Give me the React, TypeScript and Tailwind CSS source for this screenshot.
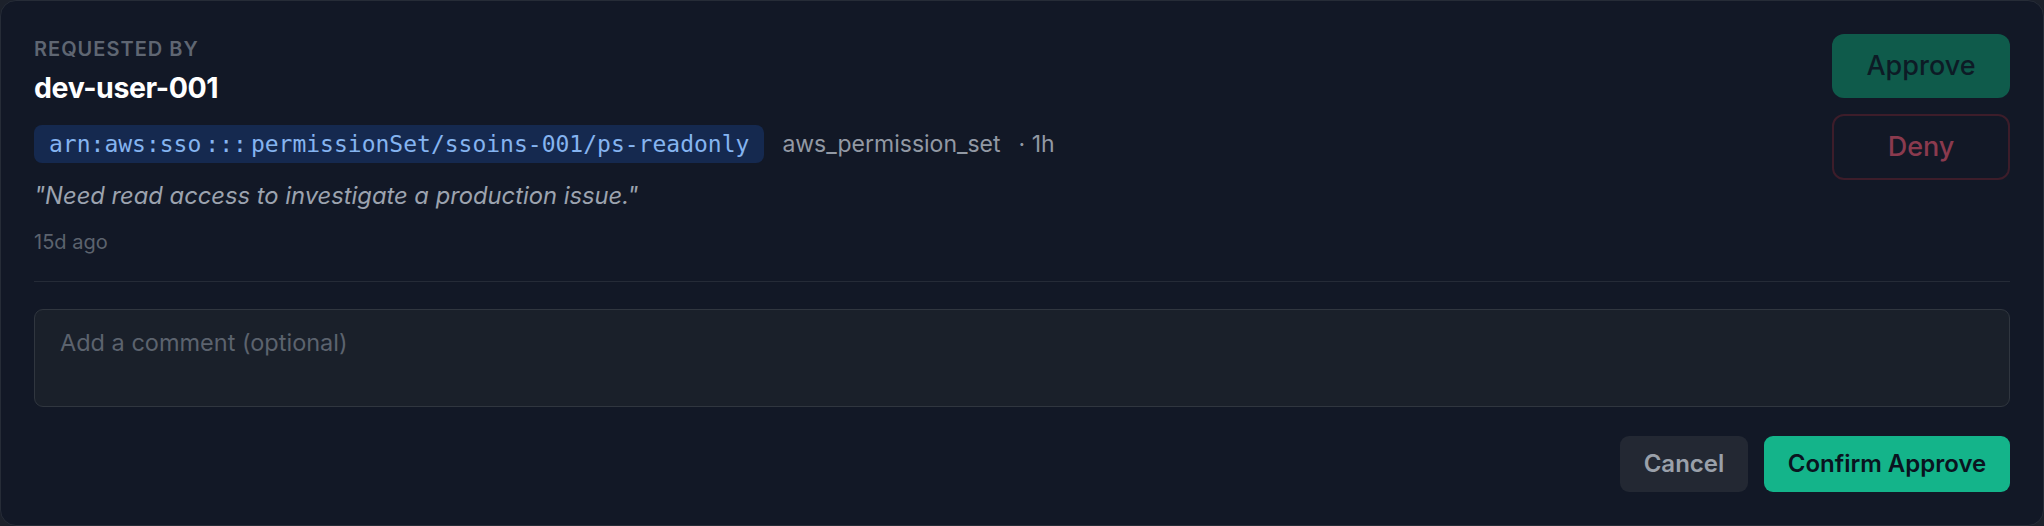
import React, { useState } from 'react';

interface AccessRequest {
  id: string;
  requester: string;
  resourceArn: string;
  resourceType: string;
  duration: string;
  reason: string;
  age: string;
}

const request: AccessRequest = {
  id: 'req-001',
  requester: 'dev-user-001',
  resourceArn: 'arn:aws:sso:::permissionSet/ssoins-001/ps-readonly',
  resourceType: 'aws_permission_set',
  duration: '1h',
  reason: 'Need read access to investigate a production issue.',
  age: '15d ago',
};

// the ":::" in the ARN gets a bit of air, like a ligature font would give it
const ArnText: React.FC<{ arn: string }> = ({ arn }) => {
  const [head, tail] = arn.split(':::');
  if (tail === undefined) return <>{arn}</>;
  return (
    <>
      {head}
      <span className="mx-[4px]">:::</span>
      {tail}
    </>
  );
};

const ApprovalCard: React.FC<{ req: AccessRequest }> = ({ req }) => {
  const [comment, setComment] = useState('');

  return (
    <div className="h-[526px] rounded-[16px] border border-[#262c37] bg-[#121826] p-[33px] font-['Inter',sans-serif]">
      {/* Request details + quick actions */}
      <div className="flex items-start justify-between">
        <div className="flex flex-col">
          <span className="text-[20px] leading-[30px] font-semibold uppercase tracking-[1px] text-[#5f6672]">
            Requested by
          </span>
          <span className="mt-[4px] text-[28.5px] leading-[40px] font-bold tracking-[-0.4px] text-white">
            {req.requester}
          </span>
          <div className="mt-[17px] flex items-center gap-[18px]">
            <code className="flex h-[38px] items-center rounded-[8px] bg-[#15294f] px-[15px] font-['DejaVu_Sans_Mono',monospace] text-[23px] text-[#85b4f0]">
              <ArnText arn={req.resourceArn} />
            </code>
            <span className="text-[23px] text-[#9299a4]">{req.resourceType}</span>
            <span className="text-[23px] text-[#9299a4]">· {req.duration}</span>
          </div>
          <p className="mt-[16px] text-[23.75px] leading-[33px] italic text-[#9ca3af]">"{req.reason}"</p>
          <span className="mt-[16px] text-[20px] leading-[28px] text-[#5c636e]">{req.age}</span>
        </div>

        <div className="flex flex-col gap-[16px]">
          <button className="h-[64px] w-[178px] rounded-[12px] bg-[#0f5b4b] text-[27px] font-medium text-[#0d1b26]">
            Approve
          </button>
          <button className="h-[66px] w-[178px] rounded-[12px] border-2 border-[#3d1d2a] text-[27px] font-medium text-[#8a3a4e]">
            Deny
          </button>
        </div>
      </div>

      {/* Comment + confirm */}
      <div className="mt-[25px] border-t border-[#252b37] pt-[27px]">
        <textarea
          value={comment}
          onChange={(e) => setComment(e.target.value)}
          placeholder="Add a comment (optional)"
          className="block h-[98px] w-full resize-none rounded-[9px] border-[1.5px] border-[#30363f] bg-[#1a202a] px-[25px] pt-[15px] pb-[18px] text-[23.5px] text-white placeholder:text-[#5c636e] focus:outline-none"
        />
        <div className="mt-[29px] flex justify-end gap-[16px]">
          <button className="h-[56px] w-[128px] rounded-[9px] bg-[#232833] text-[24px] font-semibold text-[#9aa0aa]">
            Cancel
          </button>
          <button className="h-[56px] w-[246px] rounded-[9px] bg-[#14b48a] text-[24px] font-semibold text-[#0a1420]">
            Confirm Approve
          </button>
        </div>
      </div>
    </div>
  );
};

export default function App() {
  return (
    <div className="min-h-screen bg-[#1c212b]">
      <ApprovalCard req={request} />
    </div>
  );
}
